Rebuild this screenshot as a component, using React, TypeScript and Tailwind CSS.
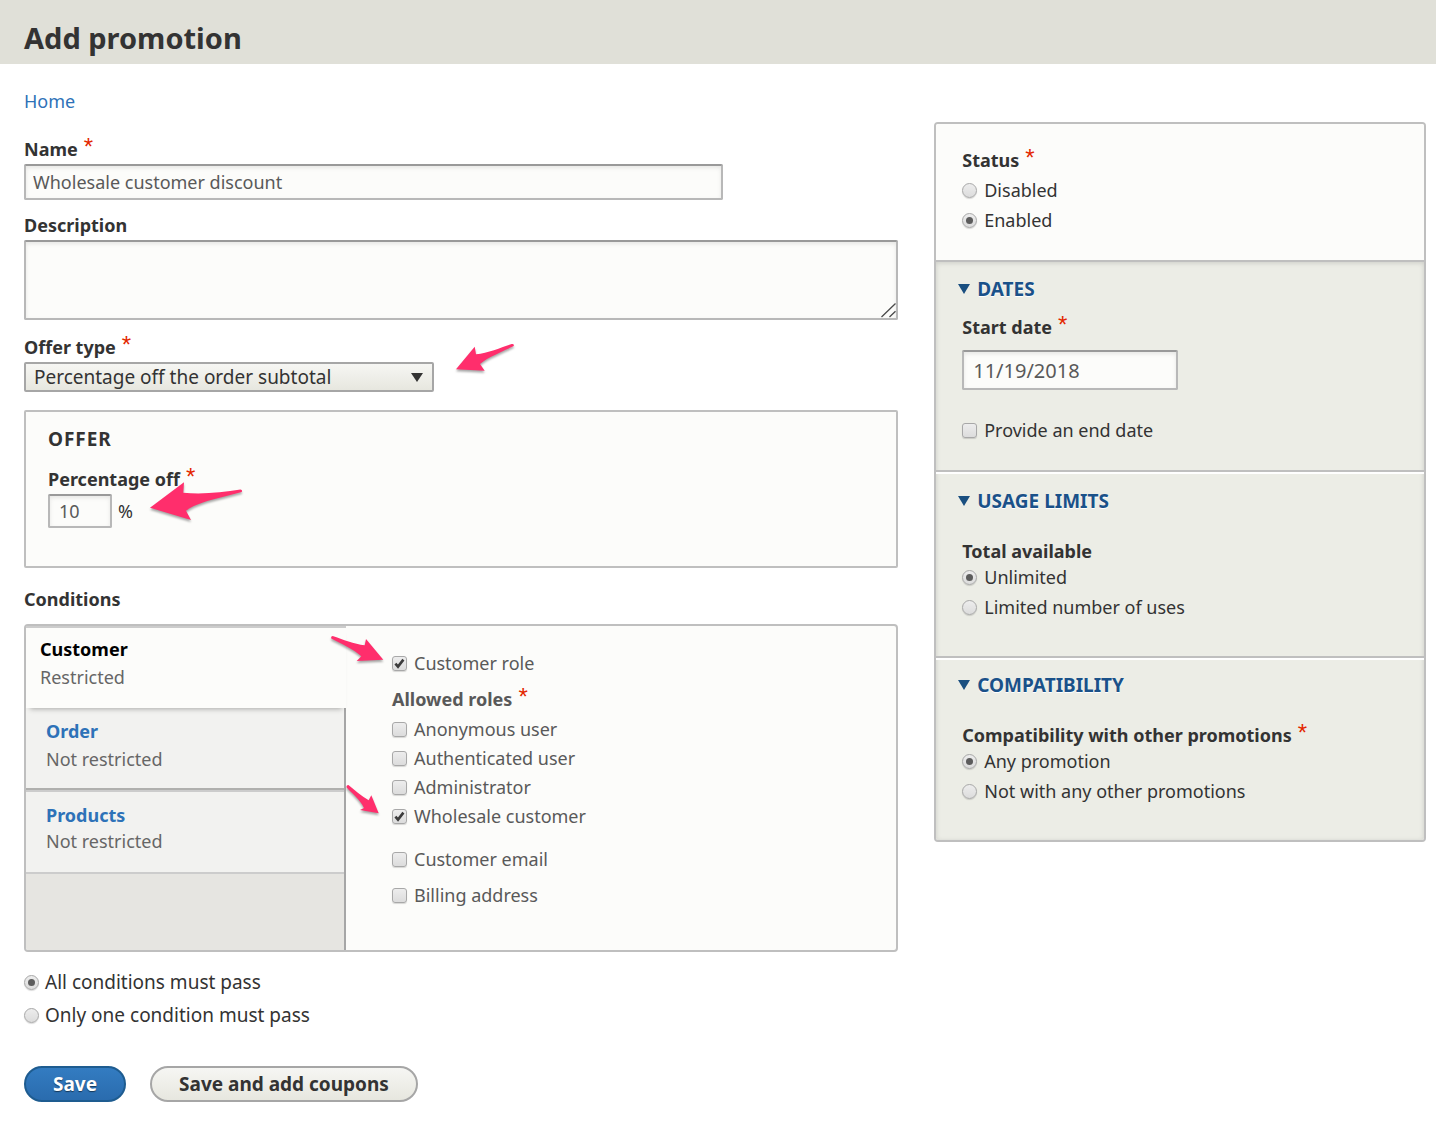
import React, { useId } from 'react';

function Star() {
  return (
    <span aria-hidden="true" className="ml-1.5 font-['Liberation_Sans'] text-2xl leading-5 font-normal text-[#e32700]">
      *
    </span>
  );
}

const labelText = 'flex h-6 items-start text-lg leading-6 font-bold';

const inputFrame =
  'rounded-xs border-2 border-[#b8b8b8] border-t-[#999] bg-[#fcfcfa] text-[#595959] shadow-[inset_0_2px_4px_rgba(0,0,0,0.09)] outline-none';

type ChoiceProps = {
  label: string;
  type: 'radio' | 'checkbox';
  name?: string;
  checked?: boolean;
  large?: boolean;
};

function Choice({ label, type, name, checked, large }: ChoiceProps) {
  const id = useId();
  return (
    <div className={large ? 'flex items-center gap-1.5' : 'flex items-center gap-[7px]'}>
      <span className="grid size-[15px] shrink-0 place-items-center">
        <input
          id={id}
          type={type}
          name={name}
          defaultChecked={checked}
          className={
            'peer col-start-1 row-start-1 size-[15px] appearance-none border border-[#a8a8a8] bg-linear-to-b from-[#ededed] to-[#dcdcdc] shadow-[0_1px_1px_rgba(0,0,0,0.15)] ' +
            (type === 'radio' ? 'rounded-full' : 'rounded-[3px]')
          }
        />
        {type === 'radio' ? (
          <span className="pointer-events-none col-start-1 row-start-1 hidden size-[7px] rounded-full bg-[#5c5c5c] peer-checked:block" />
        ) : (
          <svg
            viewBox="0 0 15 15"
            className="pointer-events-none col-start-1 row-start-1 hidden size-[15px] peer-checked:block"
            fill="none"
            stroke="#3c3c3c"
            strokeWidth="2.6"
          >
            <path d="M3.4 7.6 L6 10.6 L11.4 3.6" />
          </svg>
        )}
      </span>
      <label htmlFor={id} className={large ? 'text-[19px] leading-6' : 'text-lg leading-6'}>
        {label}
      </label>
    </div>
  );
}

function Arrow({ d, viewBox, className }: { d: string; viewBox: string; className: string }) {
  return (
    <svg
      aria-hidden="true"
      viewBox={viewBox}
      className={'pointer-events-none absolute z-10 overflow-visible drop-shadow-[0_2px_1px_rgba(0,0,0,0.35)] ' + className}
    >
      <path d={d} fill="#ff2e6c" />
    </svg>
  );
}

function Panel({ title, className, children }: { title: string; className: string; children: React.ReactNode }) {
  return (
    <details open className={'pr-6 pl-[26px] ' + className}>
      <summary className="-ml-1 flex cursor-pointer list-none items-center gap-[7px] text-[19px] leading-6 font-bold text-[#1a5189] uppercase [text-shadow:0_1px_0_#fff]">
        <svg viewBox="0 0 12 10" className="h-2.5 w-3" fill="#1a4f80" aria-hidden="true">
          <path d="M0 0H12L6 10Z" />
        </svg>
        {title}
      </summary>
      {children}
    </details>
  );
}

export default function App() {
  return (
    <div className="min-h-screen bg-white font-['Noto_Sans',sans-serif] text-[#333]">
      <header className="bg-[#e0e0d8] px-6 pt-[22px] pb-[10px]">
        <h1 className="text-[29px] leading-8 font-bold">Add promotion</h1>
      </header>

      <form className="grid grid-cols-[16fr_9fr] items-start gap-9 pr-2.5 pb-8 pl-6" onSubmit={(e) => e.preventDefault()}>
        <main className="min-w-0 pt-[25px]">
          <nav aria-label="Breadcrumb" className="text-lg leading-6">
            <a href="#home" className="text-[#2e72b8]">Home</a>
          </nav>

          <div className="mt-6 flex flex-col items-start">
            <label htmlFor="name" className={labelText}>Name<Star /></label>
            <input
              id="name"
              type="text"
              defaultValue="Wholesale customer discount"
              className={'mt-[3px] h-9 w-4/5 px-[7px] text-lg leading-6 ' + inputFrame}
            />
          </div>

          <div className="mt-[13px]">
            <label htmlFor="description" className={labelText}>Description</label>
            <div className="relative mt-[3px]">
              <textarea
                id="description"
                className={'block h-20 w-full resize-none px-2 py-1 text-lg leading-6 ' + inputFrame}
              />
              <svg
                viewBox="0 0 15 15"
                className="pointer-events-none absolute right-0.5 bottom-0.5 size-[15px]"
                fill="none"
                stroke="#4a4a4a"
                strokeWidth="1.3"
                aria-hidden="true"
              >
                <path d="M0.5 14 L14.5 0.5 M8.5 14 L14.5 8.2" />
              </svg>
            </div>
          </div>

          <div className="mt-[15px]">
            <label htmlFor="offer-type" className={labelText}>Offer type<Star /></label>
            <div className="relative mt-[3px] flex">
              <select
                id="offer-type"
                className="h-[30px] w-[410px] appearance-none rounded-xs border-2 border-[#a6a6a6] bg-linear-to-b from-[#f6f6f3] to-[#e7e7df] pr-8 pl-2 text-[19px] leading-6 text-[#333] outline-none"
              >
                <option>Percentage off the order subtotal</option>
              </select>
              <svg viewBox="0 0 12 9" className="pointer-events-none absolute top-[11px] left-[387px] h-[9px] w-3" fill="#333" aria-hidden="true">
                <path d="M0 0H12L6 9Z" />
              </svg>
              <Arrow
                className="-top-5 left-[431px] h-[30px] w-[60px]"
                viewBox="455 342 60 30"
                d="M456 369.3 L474.7 346.7 L476 354.3 C488 353 500 348 511.7 344 Q514.4 343.6 513.7 346 C502 352 488 357 480 364 L484.7 370.7 Z"
              />
            </div>
          </div>

          <fieldset className="relative mt-[18px] rounded-xs border-2 border-[#bfbfbf] bg-[#fcfcfa] px-[22px] pt-[15px] pb-[38px]">
            <div className="text-[19px] leading-6 font-bold tracking-wider">OFFER</div>
            <div className="mt-4">
              <label htmlFor="percentage" className={labelText}>Percentage off<Star /></label>
              <div className="mt-[3px] flex items-center gap-1.5 text-lg leading-6">
                <input id="percentage" type="text" defaultValue="10" className={'h-[34px] w-16 px-[9px] text-lg leading-6 ' + inputFrame} />
                <span>%</span>
              </div>
            </div>
            <Arrow
              className="top-[69px] left-[123px] h-10 w-[94px]"
              viewBox="149 481 94 40"
              d="M150 507.7 L184 482.3 L183.3 492.7 C202 494.5 222 492.5 240.5 489.5 Q242.8 490 241.7 492 C222 497.5 198 501.5 186 510.7 L191 520 Z"
            />
          </fieldset>

          <h2 className="mt-[19px] text-lg leading-6 font-bold">Conditions</h2>

          <div className="relative mt-[13px] grid grid-cols-[320px_1fr] rounded border-2 border-[#bfbfbf] bg-[#fcfcfa]">
            <ul className="flex flex-col rounded-l-xs border-r-2 border-[#a6a6a6] bg-[#e6e5e1]">
              <li className="relative -mr-0.5 h-[82px] border-t-2 border-[#ccc] bg-[#fcfcfa] pt-[9px] pl-3.5 shadow-[0_5px_5px_-4px_rgba(0,0,0,0.3)]">
                <a href="#customer" className="block text-lg leading-6 font-bold text-black">
                  Customer
                  <span className="mt-1 block font-normal text-[#666]">Restricted</span>
                </a>
              </li>
              <li className="h-[82px] border-b-2 border-[#b0b0ae] bg-[#f2f2f0] pt-[11px] pl-5">
                <a href="#order" className="block text-lg leading-6 font-bold text-[#2e72b8]">
                  Order
                  <span className="mt-1 block font-normal text-[#666]">Not restricted</span>
                </a>
              </li>
              <li className="h-[84px] border-y-2 border-[#ccc] bg-[#f2f2f0] pt-[11px] pl-5">
                <a href="#products" className="block text-lg leading-6 font-bold text-[#2e72b8]">
                  Products
                  <span className="mt-0.5 block font-normal text-[#666]">Not restricted</span>
                </a>
              </li>
            </ul>

            <div className="px-[46px] pt-[25px] pb-[43px] text-[#595959]">
              <Choice type="checkbox" label="Customer role" checked />
              <div role="group" aria-labelledby="allowed-roles" className="mt-3">
                <div id="allowed-roles" className={labelText}>Allowed roles<Star /></div>
                <div className="mt-1.5 flex flex-col gap-[5px]">
                  <Choice type="checkbox" label="Anonymous user" />
                  <Choice type="checkbox" label="Authenticated user" />
                  <Choice type="checkbox" label="Administrator" />
                  <Choice type="checkbox" label="Wholesale customer" checked />
                </div>
              </div>
              <div className="mt-[19px] flex flex-col gap-3">
                <Choice type="checkbox" label="Customer email" />
                <Choice type="checkbox" label="Billing address" />
              </div>
            </div>

            <Arrow
              className="top-[9px] left-[304px] h-[27px] w-[54px]"
              viewBox="330 635 54 27"
              d="M383.3 659.7 L366 639 L364.7 645.3 C354 644 343 639.5 332.6 636 Q330.6 636.4 331.3 638.5 C341 644 354 649 361.3 656.3 L356.7 661 Z"
            />
            <Arrow
              className="top-[158px] left-80 h-[30px] w-[34px]"
              viewBox="346 784 34 30"
              d="M378.7 813.3 L371.3 795.3 L368.7 800.3 C361 796 355 790 348.4 785 Q346 785.4 346.6 787.6 C352 793.5 360 799.5 364 808 L360 810 Z"
            />
          </div>

          <div className="mt-[18px] flex flex-col gap-[9px]">
            <Choice type="radio" name="operator" label="All conditions must pass" checked large />
            <Choice type="radio" name="operator" label="Only one condition must pass" large />
          </div>

          <div className="mt-[39px] flex gap-6">
            <button
              type="submit"
              className="h-9 rounded-full border-2 border-[#1e5c90] bg-linear-to-b from-[#337cc1] to-[#2a6cae] px-[27px] text-[19px] leading-6 font-bold text-white [text-shadow:0_1px_1px_rgba(0,0,0,0.5)]"
            >
              Save
            </button>
            <button
              type="button"
              className="h-9 rounded-full border-2 border-[#a6a6a6] bg-linear-to-b from-[#f6f6f3] to-[#e7e7df] px-[27px] text-[19px] leading-6 font-bold text-[#333]"
            >
              Save and add coupons
            </button>
          </div>
        </main>

        <aside className="mt-[58px] min-w-0 overflow-hidden rounded border-2 border-[#bfbfbf]">
          <section className="bg-[#fcfcfa] px-[26px] pt-6 pb-7">
            <div className={labelText}>Status<Star /></div>
            <div className="mt-1.5 flex flex-col gap-1.5">
              <Choice type="radio" name="status" label="Disabled" />
              <Choice type="radio" name="status" label="Enabled" checked />
            </div>
          </section>

          <div className="border-t-2 border-[#bfbfbf] bg-[#ecede6] shadow-[inset_0_1px_5px_rgba(0,0,0,0.14)]">
            <Panel title="Dates" className="pt-[15px] pb-7">
              <div className="mt-3.5 flex flex-col items-start">
                <label htmlFor="start-date" className={labelText}>Start date<Star /></label>
                <input
                  id="start-date"
                  type="text"
                  defaultValue="11/19/2018"
                  className={'mt-[11px] mb-7 h-10 w-[216px] px-[9px] text-xl leading-6 ' + inputFrame}
                />
                <Choice type="checkbox" label="Provide an end date" />
              </div>
            </Panel>

            <div className="h-1 border-t-2 border-[#bfbfbf] bg-white" />
            <Panel title="Usage limits" className="pt-[15px] pb-[37px]">
              <div className={'mt-[26px] ' + labelText}>Total available</div>
              <div className="mt-0.5 flex flex-col gap-1.5">
                <Choice type="radio" name="usage" label="Unlimited" checked />
                <Choice type="radio" name="usage" label="Limited number of uses" />
              </div>
            </Panel>

            <div className="h-1 border-t-2 border-[#bfbfbf] bg-white" />
            <Panel title="Compatibility" className="pt-[13px] pb-[37px]">
              <div className={'mt-[26px] ' + labelText}>Compatibility with other promotions<Star /></div>
              <div className="mt-0.5 flex flex-col gap-1.5">
                <Choice type="radio" name="compatibility" label="Any promotion" checked />
                <Choice type="radio" name="compatibility" label="Not with any other promotions" />
              </div>
            </Panel>
          </div>
        </aside>
      </form>
    </div>
  );
}
